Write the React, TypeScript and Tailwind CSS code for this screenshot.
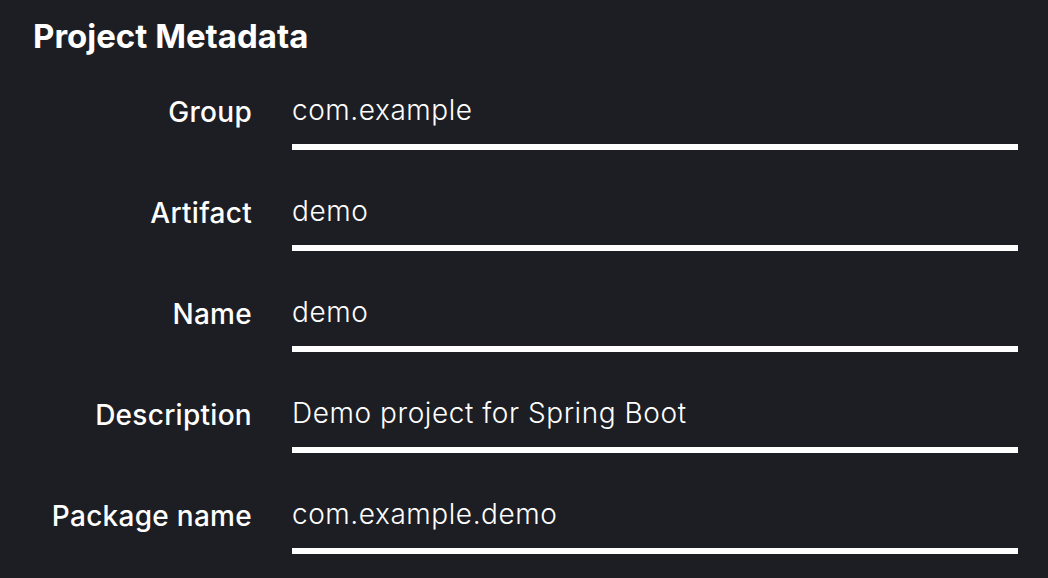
const fields = [
  { label: "Group", value: "com.example" },
  { label: "Artifact", value: "demo" },
  { label: "Name", value: "demo" },
  { label: "Description", value: "Demo project for Spring Boot" },
  { label: "Package name", value: "com.example.demo" },
];

export default function App() {
  return (
    <div
      className="min-h-screen w-full bg-[#1c1e23] text-white"
      style={{ fontFamily: "Inter, 'Open Sans', sans-serif" }}
    >
      <div className="pl-[33px] pt-[16px]">
        <h2 className="text-[33px] font-bold leading-[40px]">Project Metadata</h2>
      </div>

      {/* form rows */}
      <div className="mt-[36px] flex flex-col">
        {fields.map((f) => (
          <div key={f.label} className="flex h-[101px] items-start">
            <label className="w-[252px] pt-[2px] text-right text-[28px] font-medium leading-[36px] tracking-[0.01em]">
              {f.label}
            </label>
            <div className="ml-[40px] w-[726px]">
              <input
                readOnly
                value={f.value}
                className="block w-full border-b-[6px] border-white bg-transparent pb-[16px] text-[28px] font-light leading-[36px] tracking-[0.02em] text-white outline-none"
              />
            </div>
          </div>
        ))}
      </div>
    </div>
  );
}
